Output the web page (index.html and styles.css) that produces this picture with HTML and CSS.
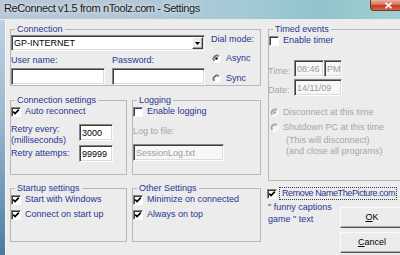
FILE: index.html
```html
<!DOCTYPE html>
<html>
<head>
<meta charset="utf-8">
<link rel="stylesheet" href="styles.css">
</head>
<body>
<div class="window">
  <div class="titlebar">
    <span class="title">ReConnect v1.5 from nToolz.com - Settings</span>
    <div class="close"><svg width="9" height="7" viewBox="0 0 9 7"><path d="M1.5 0.8 L7.5 6.2 M7.5 0.8 L1.5 6.2" stroke="#fff" stroke-width="1.7"/></svg></div>
  </div>
  <div class="frame">
    <div class="edge"></div>
    <div class="content">
      <div class="left-col">
        <fieldset class="group g-conn">
          <legend>Connection</legend>
          <div class="conn-body">
            <div class="conn-main">
              <div class="combo sunken">
                <span class="combo-text">GP-INTERNET</span>
                <span class="drop"><svg width="5" height="3" viewBox="0 0 5 3"><path d="M0 0 H5 L2.5 3 Z" fill="#000"/></svg></span>
              </div>
              <div class="cred-row">
                <div class="cred"><div class="lbl">User name:</div><div class="field sunken"></div></div>
                <div class="cred"><div class="lbl">Password:</div><div class="field sunken"></div></div>
              </div>
            </div>
            <div class="dial">
              <div class="lbl">Dial mode:</div>
              <div class="opt opt-first">
                <svg class="rd" width="9" height="9" viewBox="0 0 9 9"><circle cx="4.5" cy="4.5" r="4" fill="#fff"/><path d="M1.7 7.3A4 4 0 0 1 7.3 1.7" fill="none" stroke="#7c7c7c"/><path d="M2.4 6.6A3 3 0 0 1 6.6 2.4" fill="none" stroke="#3a3a3a"/><path d="M7.3 1.7A4 4 0 0 1 1.7 7.3" fill="none" stroke="#fff"/><circle cx="4.5" cy="4.5" r="1.3" fill="#000"/></svg>
                <span>Async</span>
              </div>
              <div class="opt opt-second">
                <svg class="rd" width="9" height="9" viewBox="0 0 9 9"><circle cx="4.5" cy="4.5" r="4" fill="#fff"/><path d="M1.7 7.3A4 4 0 0 1 7.3 1.7" fill="none" stroke="#7c7c7c"/><path d="M2.4 6.6A3 3 0 0 1 6.6 2.4" fill="none" stroke="#3a3a3a"/><path d="M7.3 1.7A4 4 0 0 1 1.7 7.3" fill="none" stroke="#fff"/></svg>
                <span>Sync</span>
              </div>
            </div>
          </div>
        </fieldset>

        <div class="row">
          <fieldset class="group g-cs">
            <legend>Connection settings</legend>
            <div class="chk-row">
              <span class="cb"><svg width="8" height="8" viewBox="0 0 8 8"><path d="M1.2 3.6 L3.1 5.6 L6.8 1.6" fill="none" stroke="#000" stroke-width="1.7"/></svg></span>
              <span>Auto reconnect</span>
            </div>
            <div class="retry">
              <div class="lbl">Retry every:<br>(milliseconds)</div>
              <div class="field sunken val">3000</div>
              <div class="lbl lbl-mid">Retry attemps:</div>
              <div class="field sunken val">99999</div>
            </div>
          </fieldset>
          <fieldset class="group g-log">
            <legend>Logging</legend>
            <div class="chk-row">
              <span class="cb"></span>
              <span>Enable logging</span>
            </div>
            <div class="lbl dis log-lbl">Log to file:</div>
            <div class="field sunken val dis-field log-field">SessionLog.txt</div>
          </fieldset>
        </div>

        <div class="row row3">
          <fieldset class="group g-start">
            <legend>Startup settings</legend>
            <div class="chk-row">
              <span class="cb"><svg width="8" height="8" viewBox="0 0 8 8"><path d="M1.2 3.6 L3.1 5.6 L6.8 1.6" fill="none" stroke="#000" stroke-width="1.7"/></svg></span>
              <span>Start with Windows</span>
            </div>
            <div class="chk-row chk-next">
              <span class="cb"><svg width="8" height="8" viewBox="0 0 8 8"><path d="M1.2 3.6 L3.1 5.6 L6.8 1.6" fill="none" stroke="#000" stroke-width="1.7"/></svg></span>
              <span>Connect on start up</span>
            </div>
          </fieldset>
          <fieldset class="group g-other">
            <legend>Other Settings</legend>
            <div class="chk-row">
              <span class="cb"><svg width="8" height="8" viewBox="0 0 8 8"><path d="M1.2 3.6 L3.1 5.6 L6.8 1.6" fill="none" stroke="#000" stroke-width="1.7"/></svg></span>
              <span>Minimize on connected</span>
            </div>
            <div class="chk-row chk-next">
              <span class="cb"><svg width="8" height="8" viewBox="0 0 8 8"><path d="M1.2 3.6 L3.1 5.6 L6.8 1.6" fill="none" stroke="#000" stroke-width="1.7"/></svg></span>
              <span>Always on top</span>
            </div>
          </fieldset>
        </div>
      </div>

      <div class="right-col">
        <fieldset class="group g-timed">
          <legend>Timed events</legend>
          <div class="chk-row">
            <span class="cb"></span>
            <span>Enable timer</span>
          </div>
          <div class="trow trow-time">
            <span class="lbl dis tlbl">Time:</span>
            <span class="field sunken val dis-field t-hm">08:46</span>
            <span class="field sunken val dis-field t-ap">PM</span>
          </div>
          <div class="trow trow-date">
            <span class="lbl dis tlbl">Date:</span>
            <span class="field sunken val dis-field t-date">14/11/09</span>
          </div>
          <div class="opt dis t-opt1">
            <svg class="rd" width="9" height="9" viewBox="0 0 9 9"><circle cx="4.5" cy="4.5" r="4" fill="#f2f2f2"/><path d="M1.7 7.3A4 4 0 0 1 7.3 1.7" fill="none" stroke="#a8a8a8"/><path d="M2.4 6.6A3 3 0 0 1 6.6 2.4" fill="none" stroke="#8a8a8a"/><path d="M7.3 1.7A4 4 0 0 1 1.7 7.3" fill="none" stroke="#fff"/><circle cx="4.5" cy="4.5" r="1.3" fill="#9a9a9a"/></svg>
            <span>Disconnect at this time</span>
          </div>
          <div class="opt dis t-opt2">
            <svg class="rd" width="9" height="9" viewBox="0 0 9 9"><circle cx="4.5" cy="4.5" r="4" fill="#f2f2f2"/><path d="M1.7 7.3A4 4 0 0 1 7.3 1.7" fill="none" stroke="#a8a8a8"/><path d="M2.4 6.6A3 3 0 0 1 6.6 2.4" fill="none" stroke="#8a8a8a"/><path d="M7.3 1.7A4 4 0 0 1 1.7 7.3" fill="none" stroke="#fff"/></svg>
            <span>Shutdown PC at this time</span>
          </div>
          <div class="dis t-note">(This will disconnect)<br>(and close all programs)</div>
        </fieldset>

        <div class="remove-row">
          <span class="cb"><svg width="8" height="8" viewBox="0 0 8 8"><path d="M1.2 3.6 L3.1 5.6 L6.8 1.6" fill="none" stroke="#000" stroke-width="1.7"/></svg></span>
          <span class="focus">Remove NameThePicture.com</span>
        </div>
        <div class="lower">
          <div class="caption">" funny captions<br>game " text</div>
          <div class="buttons">
            <div class="btn"><u>O</u>K</div>
            <div class="btn"><u>C</u>ancel</div>
          </div>
        </div>
      </div>
    </div>
  </div>
</div>
</body>
</html>
```

FILE: styles.css
```css
* { box-sizing: border-box; }
html, body { margin: 0; padding: 0; }
body {
  width: 400px;
  height: 255px;
  overflow: hidden;
  background: #ececec;
  font-family: "Liberation Sans", Arial, sans-serif;
  font-size: 9px;
  line-height: 11px;
  color: #2a3690;
}
.window { width: 400px; height: 255px; display: flex; flex-direction: column; }

.titlebar {
  flex: none;
  height: 20px;
  display: flex;
  align-items: flex-start;
  background: linear-gradient(90deg, #b9c7d6 0%, #b4c7d8 35%, #a6cad6 58%, #90c5cb 80%, #a0d0d3 100%);
  border-bottom: 1px solid #e6edf2;
}
.title {
  font-size: 11px;
  line-height: 13px;
  letter-spacing: -0.4px;
  padding: 2px 0 0 4px;
  color: #1b1b1b;
  white-space: nowrap;
  text-shadow: 0 0 5px rgba(255, 255, 255, 0.9);
}
.close {
  margin-left: auto;
  width: 30px;
  height: 11px;
  display: flex;
  align-items: center;
  justify-content: center;
  padding-left: 6px;
  background: linear-gradient(180deg, #eab3a5 0%, #d6735d 45%, #c23a20 56%, #d8674c 100%);
  border-left: 1px solid #7d3124;
  border-bottom: 1px solid #7d3124;
  border-radius: 0 0 0 4px;
}
.close svg { display: block; }

.frame { flex: 1; display: flex; min-height: 0; }
.edge {
  width: 5px;
  flex: none;
  background: linear-gradient(180deg, #bfd1e3 0%, #9db9d1 40%, #7098b8 75%, #4b7a9c 100%);
}
.content {
  flex: 1;
  display: flex;
  gap: 7px;
  padding: 4px 0 0 4px;
  border-left: 1px solid #f7f7f7;
  min-width: 0;
}
.left-col { flex: none; width: 251px; display: flex; flex-direction: column; }
.right-col { flex: none; width: 136px; display: flex; flex-direction: column; }

fieldset.group {
  margin: 0;
  padding: 0;
  min-width: 0;
  border: 1px solid #b8b8b8;
}
legend {
  padding: 0 2px;
  margin-left: 4px;
  line-height: 11px;
}

.sunken {
  border: 1px solid;
  border-color: #858585 #fdfdfd #fdfdfd #858585;
  box-shadow: inset 1px 1px 0 #3e3e3e, inset -1px -1px 0 #dcdcdc;
  background: #fff;
}

/* Connection */
.g-conn { padding: 2px 2px 3px 2px; }
.conn-body { display: grid; grid-template-columns: 194px 1fr; column-gap: 6px; }
.combo {
  height: 16px;
  display: flex;
  align-items: flex-start;
  padding: 1px 1px 0 2px;
  color: #000;
}
.combo-text { padding-top: 1px; }
.drop {
  margin-left: auto;
  width: 11px;
  height: 12px;
  background: #ececec;
  border: 1px solid;
  border-color: #fff #404040 #404040 #fff;
  box-shadow: inset -1px -1px 0 #a0a0a0;
  display: flex;
  align-items: center;
  justify-content: center;
}
.drop svg { display: block; }
.cred-row { display: grid; grid-template-columns: 94px 93px; column-gap: 7px; margin-top: 4px; }
.field { display: block; height: 17px; }
.cred .field { margin-top: 2px; }
.dial { margin-top: -1px; }
.opt { display: flex; align-items: center; gap: 5px; height: 11px; white-space: nowrap; }
.opt .rd { display: block; flex: none; margin-left: 1px; }
.opt-first { margin-top: 8px; }
.opt-second { margin-top: 9px; }

/* Row groups */
.row { display: flex; gap: 5px; margin-top: 9px; }
.row3 { margin-top: 8px; }
.g-cs { width: 117px; height: 80px; padding: 4px 0 0 5px; }
.g-log { width: 129px; height: 80px; padding: 4px 0 0 5px; }
.g-start { width: 117px; height: 59px; padding: 2px 0 0 5px; }
.g-other { width: 129px; height: 59px; padding: 2px 0 0 6px; }

.chk-row { display: flex; align-items: center; gap: 4px; height: 11px; white-space: nowrap; }
.chk-next { margin-top: 4px; }
.cb {
  width: 10px;
  height: 10px;
  flex: none;
  background: #fff;
  border: 1px solid;
  border-color: #858585 #fdfdfd #fdfdfd #858585;
  box-shadow: inset 1px 1px 0 #3e3e3e;
  display: flex;
  align-items: center;
  justify-content: center;
}
.cb svg { display: block; }

.retry {
  display: grid;
  grid-template-columns: 68px 34px;
  grid-template-rows: 21px 17px;
  margin-top: 7px;
}
.retry .lbl { white-space: nowrap; }
.lbl-mid { align-self: center; }
.val { color: #000; padding: 3px 0 0 2px; white-space: nowrap; overflow: hidden; }

.dis { color: #a6a6a6; }
.dis-field { color: #9c9c9c; background: #f7f7f7; }
.log-lbl { margin-top: 9px; }
.log-field { width: 91px; margin-top: 7px; }

/* Timed events */
.g-timed { height: 157px; padding: 11px 0 0 5px; }
.trow { display: flex; align-items: flex-end; }
.trow-time { margin-top: 14px; }
.trow-date { margin-top: 2px; }
.tlbl { width: 26px; margin-left: -1px; }
.t-hm { width: 30px; }
.t-ap { width: 18px; }
.t-date { width: 48px; }
.t-opt1 { margin-top: 11px; gap: 4px; }
.t-opt2 { margin-top: 4px; gap: 4px; }
.t-note { margin-top: 2px; padding-left: 17px; white-space: nowrap; }

/* Bottom right */
.remove-row { display: flex; align-items: center; margin-top: 6px; margin-left: -1px; height: 13px; white-space: nowrap; }
.remove-row .cb { margin-right: 2px; }
.focus { border: 1px dotted #3a3a3a; padding: 0 1px 0 2px; line-height: 11px; letter-spacing: -0.4px; }
.lower { display: flex; }
.caption { margin-top: 1px; line-height: 12px; white-space: nowrap; }
.buttons { margin-left: auto; margin-top: 7px; display: flex; flex-direction: column; gap: 4px; }
.btn {
  width: 64px;
  height: 21px;
  background: #ececec;
  border: 1px solid;
  border-color: #fbfbfb #555 #555 #fbfbfb;
  box-shadow: inset -1px -1px 0 #a8a8a8;
  color: #000;
  display: flex;
  align-items: center;
  justify-content: center;
}
```
